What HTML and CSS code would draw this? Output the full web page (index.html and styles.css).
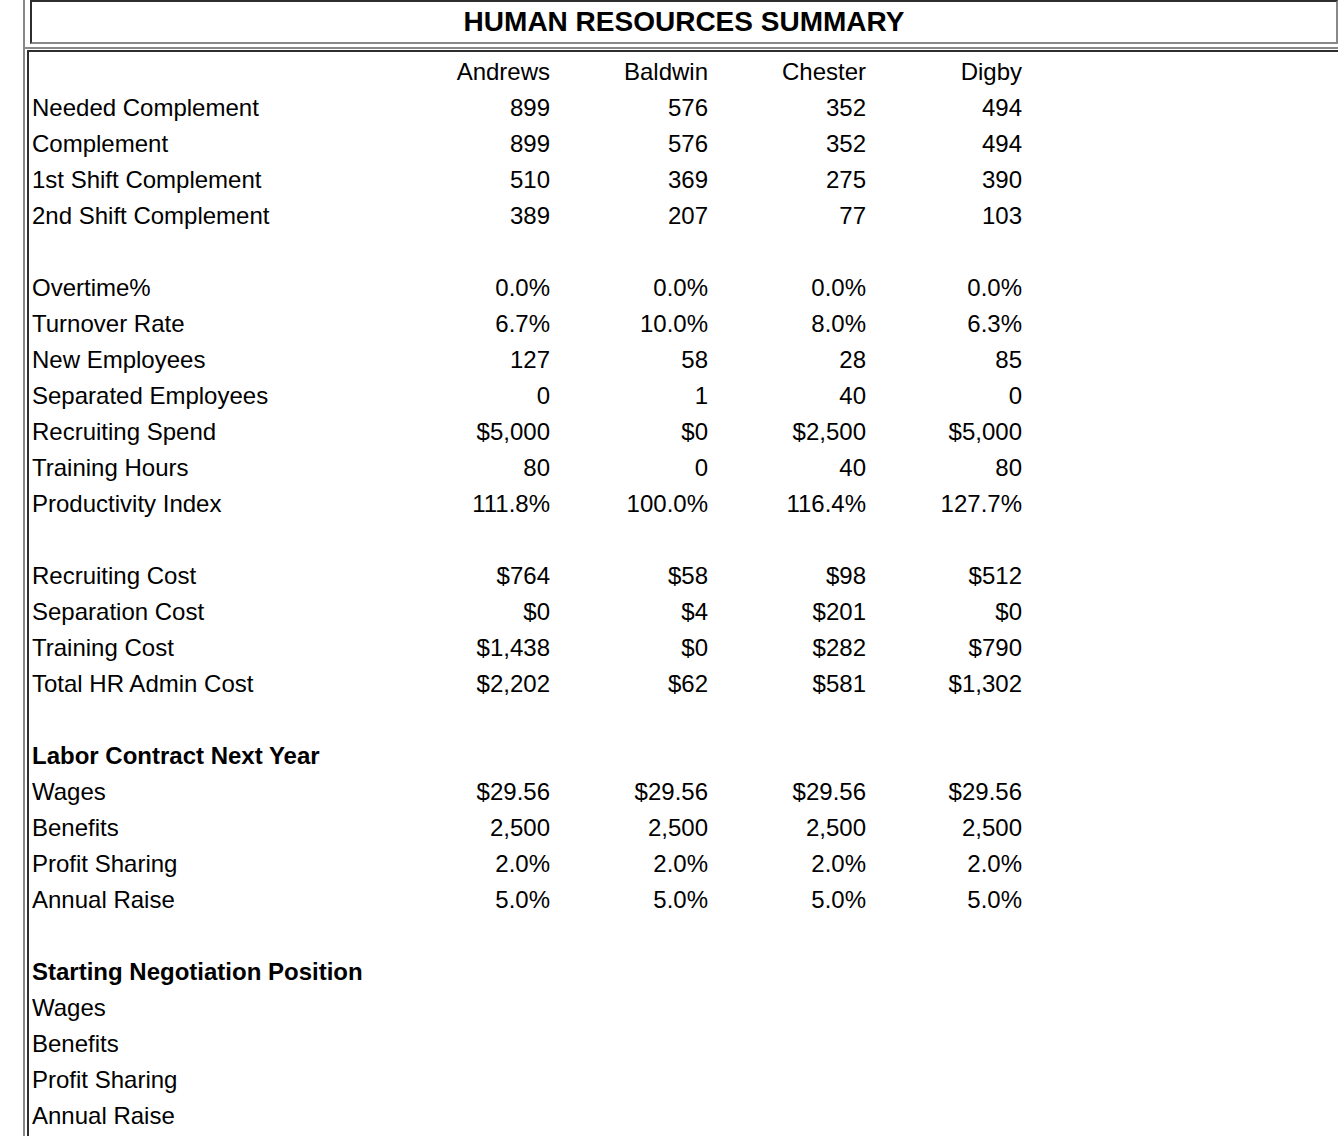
FILE: index.html
```html
<!DOCTYPE html>
<html>
<head>
<meta charset="utf-8">
<link rel="stylesheet" href="styles.css">
</head>
<body>
<div class="page">
  <div class="title-wrap">
    <div class="title-box">HUMAN RESOURCES SUMMARY</div>
  </div>
  <div class="main-wrap">
    <div class="main-box">
      <div class="row"><span></span><span class="n">Andrews</span><span class="n">Baldwin</span><span class="n">Chester</span><span class="n">Digby</span></div>
      <div class="row"><span>Needed Complement</span><span class="n">899</span><span class="n">576</span><span class="n">352</span><span class="n">494</span></div>
      <div class="row"><span>Complement</span><span class="n">899</span><span class="n">576</span><span class="n">352</span><span class="n">494</span></div>
      <div class="row"><span>1st Shift Complement</span><span class="n">510</span><span class="n">369</span><span class="n">275</span><span class="n">390</span></div>
      <div class="row"><span>2nd Shift Complement</span><span class="n">389</span><span class="n">207</span><span class="n">77</span><span class="n">103</span></div>
      <div class="row"></div>
      <div class="row"><span>Overtime%</span><span class="n">0.0%</span><span class="n">0.0%</span><span class="n">0.0%</span><span class="n">0.0%</span></div>
      <div class="row"><span>Turnover Rate</span><span class="n">6.7%</span><span class="n">10.0%</span><span class="n">8.0%</span><span class="n">6.3%</span></div>
      <div class="row"><span>New Employees</span><span class="n">127</span><span class="n">58</span><span class="n">28</span><span class="n">85</span></div>
      <div class="row"><span>Separated Employees</span><span class="n">0</span><span class="n">1</span><span class="n">40</span><span class="n">0</span></div>
      <div class="row"><span>Recruiting Spend</span><span class="n">$5,000</span><span class="n">$0</span><span class="n">$2,500</span><span class="n">$5,000</span></div>
      <div class="row"><span>Training Hours</span><span class="n">80</span><span class="n">0</span><span class="n">40</span><span class="n">80</span></div>
      <div class="row"><span>Productivity Index</span><span class="n">111.8%</span><span class="n">100.0%</span><span class="n">116.4%</span><span class="n">127.7%</span></div>
      <div class="row"></div>
      <div class="row"><span>Recruiting Cost</span><span class="n">$764</span><span class="n">$58</span><span class="n">$98</span><span class="n">$512</span></div>
      <div class="row"><span>Separation Cost</span><span class="n">$0</span><span class="n">$4</span><span class="n">$201</span><span class="n">$0</span></div>
      <div class="row"><span>Training Cost</span><span class="n">$1,438</span><span class="n">$0</span><span class="n">$282</span><span class="n">$790</span></div>
      <div class="row"><span>Total HR Admin Cost</span><span class="n">$2,202</span><span class="n">$62</span><span class="n">$581</span><span class="n">$1,302</span></div>
      <div class="row"></div>
      <div class="row"><span class="b">Labor Contract Next Year</span></div>
      <div class="row"><span>Wages</span><span class="n">$29.56</span><span class="n">$29.56</span><span class="n">$29.56</span><span class="n">$29.56</span></div>
      <div class="row"><span>Benefits</span><span class="n">2,500</span><span class="n">2,500</span><span class="n">2,500</span><span class="n">2,500</span></div>
      <div class="row"><span>Profit Sharing</span><span class="n">2.0%</span><span class="n">2.0%</span><span class="n">2.0%</span><span class="n">2.0%</span></div>
      <div class="row"><span>Annual Raise</span><span class="n">5.0%</span><span class="n">5.0%</span><span class="n">5.0%</span><span class="n">5.0%</span></div>
      <div class="row"></div>
      <div class="row"><span class="b">Starting Negotiation Position</span></div>
      <div class="row"><span>Wages</span></div>
      <div class="row"><span>Benefits</span></div>
      <div class="row"><span>Profit Sharing</span></div>
      <div class="row"><span>Annual Raise</span></div>
    </div>
  </div>
</div>
</body>
</html>
```

FILE: styles.css
```css
html, body {
  margin: 0;
  padding: 0;
  background: #ffffff;
}
body {
  font-family: "Liberation Sans", Arial, Helvetica, sans-serif;
  color: #000;
  overflow: hidden;
}
.page {
  padding-left: 23px;
  width: 1315px;
  height: 1136px;
  overflow: hidden;
}
.title-wrap {
  border-left: 2px solid #888;
  padding-left: 5px;
  padding-bottom: 3px;
}
.title-box {
  border-style: solid;
  border-width: 2px;
  border-color: #2e2e2e #888 #888 #2e2e2e;
  height: 40px;
  line-height: 40px;
  text-align: center;
  font-weight: bold;
  font-size: 28px;
}
.main-wrap {
  border-top: 2px solid #888;
  border-left: 2px solid #888;
  padding-top: 1px;
  padding-left: 2px;
  height: 1100px;
}
.main-box {
  border-top: 2px solid #2e2e2e;
  border-left: 2px solid #2e2e2e;
  padding: 2px 0 0 3px;
  height: 1090px;
}
.row {
  display: grid;
  grid-template-columns: 360px 158px 158px 158px 156px 1fr;
  height: 36px;
  line-height: 36px;
  font-size: 24px;
  white-space: nowrap;
}
.n {
  text-align: right;
}
.b {
  font-weight: bold;
}
```
